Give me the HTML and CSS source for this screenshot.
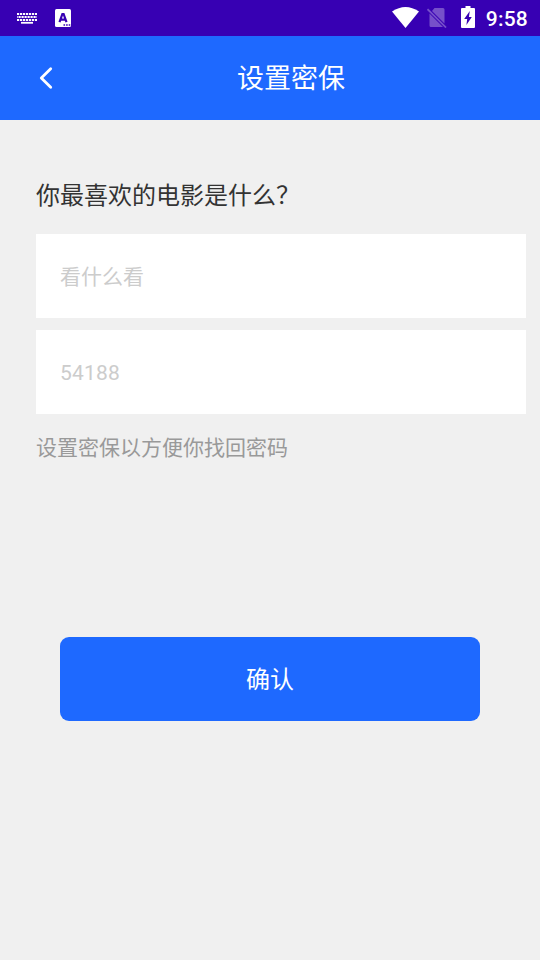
FILE: index.html
```html
<!DOCTYPE html>
<html lang="zh-CN">
<head>
<meta charset="utf-8">
<title>设置密保</title>
<link rel="stylesheet" href="styles.css">
</head>
<body>
<div class="status">
  <svg class="keyboard" width="22" height="12" viewBox="0 0 22 12"><path d="M1 2h20M1 8h20" stroke="#fff" stroke-width="1.800" stroke-dasharray="2.200 .8"/><path d="M1 5h20" stroke="#fff" stroke-width="1.800" stroke-dasharray="2.200 .8" stroke-dashoffset="1.500"/><path d="M5 10.800h12" stroke="#fff" stroke-width="1.800"/></svg>
  <svg class="letter" width="16" height="18" viewBox="0 0 16 18"><rect width="16" height="18" rx="1.500" fill="#fff"/><path d="M4.500 13.200L7.400 5h1.200l2.900 8.200M5.500 10.700h5" fill="none" stroke="#3700b3" stroke-width="2.200"/><path d="M8.500 16h7" stroke="#3700b3" stroke-width="1.600" stroke-dasharray="1.600 1"/></svg>
  <span class="spacer"></span>
  <svg class="wifi" width="27" height="21" viewBox="0 0 27 21"><path d="M0 4.500Q13.500-4.500 27 4.500L13.500 21z" fill="#fff"/></svg>
  <svg class="sim" width="20" height="20" viewBox="0 0 20 20"><path d="M7.500 0H16q1.500 0 1.500 1.500V15.500L5 3zM2.500 5.500L16 19H4q-1.500 0-1.500-1.500z" fill="#7650ca"/><path d="M.5 1.200l18.500 18.300" stroke="#7650ca" stroke-width="1.700"/></svg>
  <svg class="battery" width="14" height="22" viewBox="0 0 14 22"><path d="M4.500 0h5v2H13q1 0 1 1v18q0 1-1 1H1q-1 0-1-1V3q0-1 1-1h3.500z" fill="#fff"/><path d="M8.800 5L3.200 13h3l-.8 6 5.400-8H7.900z" fill="#3700b3"/></svg>
  <span class="time">9:58</span>
</div>
<header class="header">
  <svg class="back" width="36" height="36" viewBox="0 0 36 36"><path d="M23.700 8.800L14.300 18l9.400 9.200" fill="none" stroke="#fff" stroke-width="2.800" stroke-linecap="round" stroke-linejoin="round"/></svg>
  <h1>设置密保</h1>
</header>
<main class="content">
  <label class="question" for="answer">你最喜欢的电影是什么？</label>
  <input class="field" id="answer" placeholder="看什么看">
  <input class="field number" placeholder="54188">
  <p class="hint">设置密保以方便你找回密码</p>
  <button class="confirm">确认</button>
</main>
</body>
</html>
```

FILE: styles.css
```css
* { box-sizing: border-box; }
body { margin: 0; min-height: 960px; background: #f0f0f0; font-family: Roboto, "Noto Sans CJK SC", sans-serif; }
.status { height: 36px; background: #3700b3; display: flex; align-items: center; padding: 0 12px 0 16px; color: #fff; }
.letter { margin-left: 17px; }
.spacer { flex: 1; }
.wifi { margin-bottom: 1px; }
.sim { margin-left: 8px; }
.battery { margin: 0 11px 2px 14px; }
.time { font-size: 21px; font-weight: 500; line-height: 36px; padding-top: 2px; letter-spacing: 0.2px; }
.header { height: 84px; background: #1e69ff; display: grid; grid-template-columns: 63px 1fr 21px; align-items: center; color: #fff; }
.back { margin-left: 27px; }
h1 { margin: 0; padding-top: 2px; font-size: 27px; font-weight: 400; line-height: 40px; text-align: center; }
.content { padding: 58px 14px 0 36px; display: flex; flex-direction: column; }
.question { font-size: 24px; line-height: 36px; margin-bottom: 20px; color: #333; }
.field { width: 100%; height: 84px; border: 0; padding: 2px 24px 0; margin: 0 0 12px; background: #fff; font: 21px Roboto, "Noto Sans CJK SC", sans-serif; color: #333; outline: 0; }
.field::placeholder { color: #ccc; opacity: 1; }
.number { letter-spacing: 0.2px; }
.hint { margin: 6px 0 0; font-size: 21px; line-height: 32px; color: #999; }
.confirm { width: 420px; height: 84px; margin: 173px 0 0 24px; padding: 0 0 3px; border: 0; border-radius: 9px; background: #1e69ff; color: #fff; font: 24px Roboto, "Noto Sans CJK SC", sans-serif; }
```
